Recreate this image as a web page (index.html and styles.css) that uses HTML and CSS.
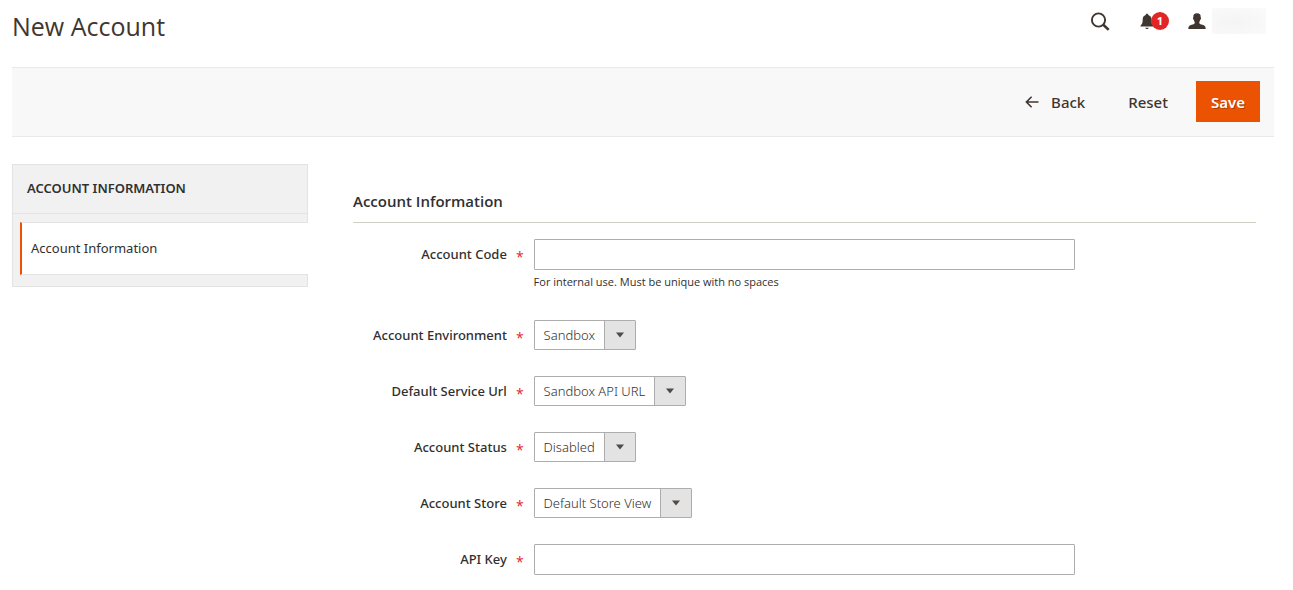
FILE: index.html
```html
<!DOCTYPE html>
<html lang="en">
<head>
<meta charset="utf-8">
<meta name="viewport" content="width=device-width, initial-scale=1">
<title>New Account</title>
<link rel="stylesheet" href="styles.css">
</head>
<body>
<div class="page">
  <header class="page-header">
    <h1 class="page-title">New Account</h1>
    <div class="header-tools">
      <button class="icon-button search" type="button" aria-label="Search">
        <svg width="20" height="20" viewBox="0 0 20 20" fill="none" stroke="#41362f"><circle cx="8.500" cy="9" r="6.600" stroke-width="1.900"/><path d="M13.300 13.800l5.400 5.100" stroke-width="2.600"/></svg>
      </button>
      <button class="icon-button notifications" type="button" aria-label="Notifications">
        <svg width="14" height="17" viewBox="0 0 14 17" fill="#41362f"><path d="M7 .8c.8 0 1.300.5 1.300 1.200 2 .6 3 2.300 3 4.300 0 3.300.5 4.900 2.300 6.700v.6H.4V13c1.800-1.800 2.300-3.400 2.300-6.700 0-2 1-3.700 3-4.300C5.700 1.300 6.200.8 7 .8zM5.300 14.700h3.400c-.2.8-.8 1.300-1.700 1.300s-1.500-.5-1.700-1.300z"/></svg>
        <span class="badge">1</span>
      </button>
      <button class="icon-button account" type="button" aria-label="Account">
        <svg width="18" height="17" viewBox="0 0 18 17" fill="#41362f"><path d="M9 .3c2.700 0 3.900 1.500 3.700 4.100.6.2.4 1.800-.3 2.200-.2 1-.6 1.700-1.100 2.300v1.300c.5 1 1.600 1.200 3 1.600 2.200.6 3.300 1.200 3.400 4.200H.3c.1-3 1.200-3.600 3.400-4.200 1.400-.4 2.500-.6 3-1.600V8.900c-.5-.6-.9-1.300-1.100-2.300-.7-.4-.9-2-.3-2.200C5.100 1.800 6.300.3 9 .3z"/></svg>
        <span class="user-name"></span>
      </button>
    </div>
  </header>

  <div class="actions-bar">
    <button class="action back" type="button">
      <svg width="14" height="12" viewBox="0 0 14 12" fill="none" stroke="#41362f" stroke-width="1.600"><path d="M13.500 6H1.500M6.600.8L1.400 6l5.200 5.200"/></svg>
      Back
    </button>
    <button class="action reset" type="button">Reset</button>
    <button class="action primary" type="submit" form="account-form">Save</button>
  </div>

  <div class="columns">
    <nav class="tabs" aria-label="Account Information">
      <h2 class="tabs-title">Account Information</h2>
      <a class="tab" href="#account-form">Account Information</a>
    </nav>

    <main class="content">
      <form id="account-form">
        <h2 class="section-title">Account Information</h2>
        <div class="field">
          <label class="label" for="code">Account Code</label>
          <div class="control">
            <input class="text-input" id="code" type="text" required>
            <p class="note">For internal use. Must be unique with no spaces</p>
          </div>
        </div>
        <div class="field">
          <label class="label" for="environment">Account Environment</label>
          <div class="control"><select class="select" id="environment"><option>Sandbox</option></select></div>
        </div>
        <div class="field">
          <label class="label" for="service">Default Service Url</label>
          <div class="control"><select class="select" id="service"><option>Sandbox API URL</option></select></div>
        </div>
        <div class="field">
          <label class="label" for="status">Account Status</label>
          <div class="control"><select class="select" id="status"><option>Disabled</option></select></div>
        </div>
        <div class="field">
          <label class="label" for="store">Account Store</label>
          <div class="control"><select class="select" id="store"><option>Default Store View</option></select></div>
        </div>
        <div class="field">
          <label class="label" for="api-key">API Key</label>
          <div class="control"><input class="text-input" id="api-key" type="text" required></div>
        </div>
      </form>
    </main>
  </div>
</div>
</body>
</html>
```
FILE: styles.css
```css
* {
  box-sizing: border-box;
}

body {
  margin: 0;
  background: #fff;
  color: #303030;
  font-family: "Noto Sans", "Open Sans", sans-serif;
  font-size: 13px;
}

h1,
h2,
p {
  margin: 0;
}

button,
input,
select {
  font-family: inherit;
}

.page {
  padding: 0 19px 0 12px;
}

.page-header {
  display: flex;
  justify-content: space-between;
  height: 67px;
  padding-top: 8px;
}

.page-title {
  color: #41362f;
  font-family: "Open Sans", sans-serif;
  font-size: 25px;
  font-weight: 400;
  line-height: 36px;
}

.header-tools {
  display: flex;
  align-items: center;
  gap: 30px;
  height: 26px;
  padding-right: 8px;
}

.icon-button {
  position: relative;
  display: flex;
  align-items: center;
  gap: 6px;
  padding: 0;
  border: 0;
  background: none;
}

.notifications {
  width: 18px;
}

.badge {
  position: absolute;
  top: -1px;
  left: 11px;
  width: 18px;
  height: 18px;
  border-radius: 50%;
  background: #e22626;
  color: #fff;
  font-size: 11px;
  font-weight: 700;
  line-height: 18px;
  text-align: center;
}

.user-name {
  width: 54px;
  height: 26px;
  background: radial-gradient(ellipse at 40% 55%, #f4f4f4, #fafafa 90%);
}

.actions-bar {
  display: flex;
  justify-content: flex-end;
  align-items: center;
  height: 70px;
  padding: 0 14px 1px 0;
  border-top: 1px solid #e9e9e9;
  border-bottom: 1px solid #e9e9e9;
  background: #f8f8f8;
}

.action {
  display: flex;
  align-items: center;
  height: 41px;
  padding: 0 15px;
  border: 0;
  background: none;
  color: #41362f;
  font-size: 15px;
  font-weight: 500;
}

.back {
  gap: 12px;
  margin-right: 13px;
}

.reset {
  margin-right: 13px;
}

.primary {
  background: #eb5202;
  color: #fff;
  font-weight: 600;
  text-shadow: 1px 1px 0 rgba(0, 0, 0, 0.25);
}

.columns {
  display: flex;
  align-items: flex-start;
  gap: 45px;
  padding-top: 27px;
}

.tabs {
  flex: 0 0 296px;
  padding-bottom: 11px;
  border: 1px solid #e3e3e3;
  background: #f1f1f1;
}

.tabs-title {
  margin-bottom: 8px;
  padding: 0 14px 1px;
  border-bottom: 1px solid #e3e3e3;
  font-size: 13px;
  font-weight: 600;
  line-height: 47px;
  text-transform: uppercase;
}

.tab {
  display: block;
  margin: 0 -1px 0 7px;
  padding-left: 9px;
  border: 1px solid #e3e3e3;
  border-width: 1px 0;
  border-left: 2px solid #eb5202;
  background: #fff;
  color: #303030;
  font-weight: 400;
  line-height: 51px;
  text-decoration: none;
}

.content {
  flex: 1;
  padding: 25px 18px 0 0;
}

.section-title {
  margin-bottom: 16px;
  padding-bottom: 8px;
  border-bottom: 1px solid #d0cfc3;
  font-family: "Open Sans", sans-serif;
  font-size: 15px;
  font-weight: 600;
  line-height: 25px;
}

.field {
  display: grid;
  grid-template-columns: 20% 60%;
  margin-bottom: 26px;
}

.field:last-child {
  margin-bottom: 0;
}

.label {
  display: flex;
  justify-content: flex-end;
  align-items: flex-start;
  gap: 9px;
  height: 30px;
  padding-right: 10px;
  font-weight: 500;
  line-height: 30px;
}

.label::after {
  content: "*";
  padding-top: 3px;
  color: #e22626;
  font-family: "Open Sans", sans-serif;
  font-size: 14px;
  font-weight: 400;
}

.control {
  display: flex;
  flex-direction: column;
  align-items: flex-start;
}

.text-input {
  width: 100%;
  height: 31px;
  padding: 0 9px;
  border: 1px solid #adadad;
  border-radius: 1px;
  font-size: 13px;
}

.note {
  margin-bottom: 3px;
  padding-top: 3px;
  font-family: "Open Sans", sans-serif;
  font-size: 11px;
  line-height: 18px;
}

.select {
  height: 30px;
  padding: 0 39px 0 9px;
  border: 1px solid #adadad;
  border-radius: 1px;
  appearance: none;
  background-color: #fff;
  background-image:
    url("data:image/svg+xml,%3Csvg xmlns='http://www.w3.org/2000/svg' width='8' height='6'%3E%3Cpath d='M0 .5h8L4 5.500z' fill='%23514943'/%3E%3C/svg%3E"),
    linear-gradient(#adadad, #adadad),
    linear-gradient(#e3e3e3, #e3e3e3);
  background-position: right 11px center, right 30px center, right center;
  background-repeat: no-repeat;
  background-size: 8px 6px, 1px 100%, 30px 100%;
  color: #303030;
  font-size: 13px;
  font-weight: 300;
}
```
